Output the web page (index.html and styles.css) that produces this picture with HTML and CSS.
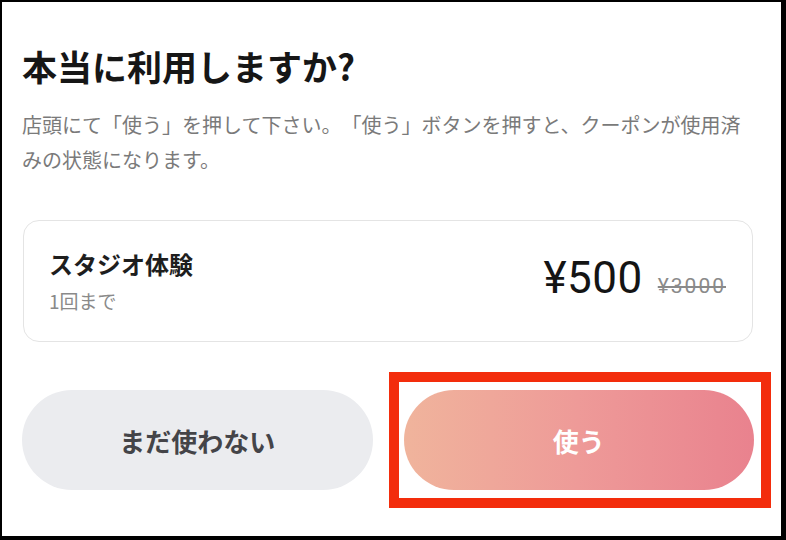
FILE: index.html
```html
<!DOCTYPE html>
<html lang="ja">
<head>
    <meta charset="UTF-8">
    <meta name="viewport" content="width=device-width, initial-scale=1.0">
    <title>クーポン利用確認</title>
    <link rel="stylesheet" href="styles.css">
</head>
<body>
    <div class="sheet">
        <h1 class="title">本当に利用しますか?</h1>
        <p class="note">店頭にて「使う」を押して下さい。「使う」ボタンを押すと、クーポンが使用済みの状態になります。</p>

        <div class="coupon">
            <div class="coupon-info">
                <div class="coupon-name">スタジオ体験</div>
                <div class="coupon-limit">1回まで</div>
            </div>
            <div class="coupon-price">
                <span class="price">¥500</span>
                <span class="price-old">¥3000</span>
            </div>
        </div>

        <div class="actions">
            <button class="btn btn-later">まだ使わない</button>
            <div class="highlight">
                <button class="btn btn-use">使う</button>
            </div>
        </div>
    </div>
</body>
</html>
```

FILE: styles.css
```css
html, body {
    margin: 0;
    padding: 0;
    background: #000;
}
body {
    font-family: "Noto Sans CJK JP", "Noto Sans", sans-serif;
    text-spacing-trim: space-all;
}
.sheet {
    background: #fff;
    margin: 2px 5px 4px 2px;
    height: 534px;
    box-sizing: border-box;
    padding: 43px 27px 0 20px;
}
.title {
    margin: 0;
    font-size: 35px;
    line-height: 42px;
    font-weight: 700;
    color: #161616;
}
.note {
    margin: 20px 0 0;
    font-size: 20px;
    line-height: 35px;
    color: #7a7a7a;
}
.coupon {
    margin: 43px 1px 0;
    height: 122px;
    box-sizing: border-box;
    border: 1px solid #e4e4e4;
    border-radius: 16px;
    padding: 0 26px 0 25px;
    display: flex;
    align-items: center;
    justify-content: space-between;
}
.coupon-name {
    font-size: 24px;
    line-height: 30px;
    font-weight: 600;
    color: #1e1e1e;
}
.coupon-limit {
    margin-top: 9px;
    font-size: 19px;
    line-height: 26px;
    color: #8a8a8a;
}
.coupon-price {
    display: flex;
    align-items: baseline;
    gap: 15px;
    margin-top: -6px;
}
.price {
    font-family: Roboto, "Noto Sans", sans-serif;
    font-size: 44px;
    font-weight: 400;
    letter-spacing: 0.5px;
    color: #141414;
}
.price-old {
    font-family: Roboto, "Noto Sans", sans-serif;
    font-size: 21px;
    letter-spacing: 2px;
    color: #8a8a8a;
    text-decoration: line-through;
}
.actions {
    margin-top: 48px;
    display: flex;
    gap: 31px;
}
.btn {
    height: 100px;
    padding: 0;
    box-sizing: border-box;
    border: none;
    border-radius: 50px;
    font-family: inherit;
    font-size: 26px;
    font-weight: 600;
    cursor: pointer;
}
.btn-later {
    flex: 1 1 0;
    min-width: 0;
    background: #ebecef;
    color: #444448;
}
.highlight {
    flex: 1 1 0;
    min-width: 0;
    display: flex;
    position: relative;
}
.highlight::after {
    content: "";
    position: absolute;
    top: -18px;
    bottom: -18px;
    left: -15px;
    right: -17px;
    border: 10px solid #f32d0c;
}
.btn-use {
    flex: 1;
    background: linear-gradient(90deg, #f0b49c 0%, #ee9a98 50%, #e9828e 100%);
    color: #fff;
}
```
